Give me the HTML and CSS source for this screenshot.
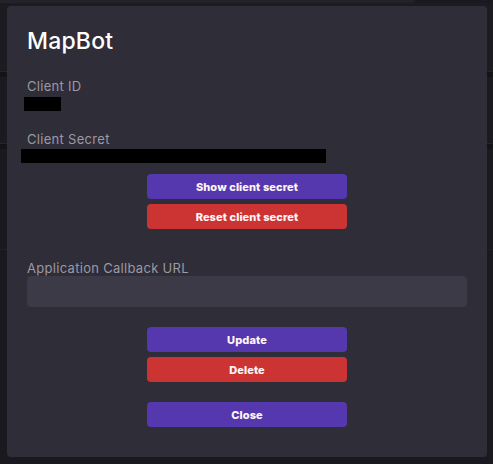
FILE: index.html
```html
<!DOCTYPE html>
<html>
<head>
<meta charset="utf-8">
<link rel="stylesheet" href="styles.css">
</head>
<body>
<div class="page">
  <div class="topbar"></div>
  <div class="section s1"></div>
  <div class="band"></div>
  <div class="section s2"></div>
  <div class="band"></div>
  <div class="section s3"></div>
  <div class="section s4"></div>
</div>
<div class="modal">
  <h1 class="title">MapBot</h1>
  <div class="label label-first">Client ID</div>
  <div class="redact redact-id"></div>
  <div class="label label-secret">Client Secret</div>
  <div class="redact redact-secret"></div>
  <div class="btns btns-secret">
    <button class="btn purple">Show client secret</button>
    <button class="btn red">Reset client secret</button>
  </div>
  <div class="label label-url">Application Callback URL</div>
  <div class="input"></div>
  <div class="btns btns-actions">
    <button class="btn purple">Update</button>
    <button class="btn red">Delete</button>
  </div>
  <div class="btns btns-close">
    <button class="btn purple">Close</button>
  </div>
</div>
</body>
</html>
```
FILE: styles.css
```css
html, body {
  margin: 0;
  padding: 0;
  width: 493px;
  height: 464px;
  overflow: hidden;
  background: #1a191f;
  font-family: Inter, "Noto Sans", sans-serif;
}
.page {
  display: flex;
  flex-direction: column;
  height: 464px;
}
.topbar {
  height: 3px;
  width: 415px;
  background: #232228;
  border-radius: 0 0 3px 0;
}
.section { border-bottom: 1px solid #26252c; }
.s1 { height: 68px; background: #1c1b21; }
.band { height: 5px; background: #141318; }
.s2 { height: 66px; background: #1b1a20; }
.s3 { height: 100px; background: #1a191f; border-bottom: 1px solid #222127; }
.s4 { flex: 1; border-bottom: none; }

.modal {
  position: absolute;
  left: 7px;
  top: 6px;
  width: 480px;
  height: 451px;
  box-sizing: border-box;
  background: #2f2d38;
  border-radius: 4px;
  padding: 21px 20px 0 20px;
  display: flex;
  flex-direction: column;
}
.title {
  margin: 0;
  font-size: 23px;
  line-height: 28px;
  font-weight: 500;
  color: #ffffff;
  letter-spacing: 0.2px;
}
.label {
  font-size: 13px;
  line-height: 16px;
  color: #9b99a4;
  letter-spacing: 0.3px;
}
.label-first { margin-top: 23px; }
.label-secret { margin-top: 20px; }
.label-url { margin-top: 31px; }
.redact { background: #000; height: 14px; }
.redact-id { margin-top: 3px; width: 37px; margin-left: -3px; }
.redact-secret { margin-top: 2px; width: 305px; margin-left: -6px; }
.btns {
  display: flex;
  flex-direction: column;
  align-items: center;
  gap: 5px;
}
.btns-secret { margin-top: 11px; }
.btns-actions { margin-top: 20px; }
.btns-close { margin-top: 20px; }
.btn {
  width: 200px;
  height: 25px;
  border: none;
  border-radius: 4px;
  color: #fff4f6;
  font-family: Inter, "Noto Sans", sans-serif;
  font-size: 11px;
  font-weight: 800;
  letter-spacing: 0.1px;
  padding: 0;
}
.purple { background: #5538ad; }
.red { background: #cc3434; }
.input {
  height: 31px;
  background: #3d3a48;
  border-radius: 4px;
}
```
